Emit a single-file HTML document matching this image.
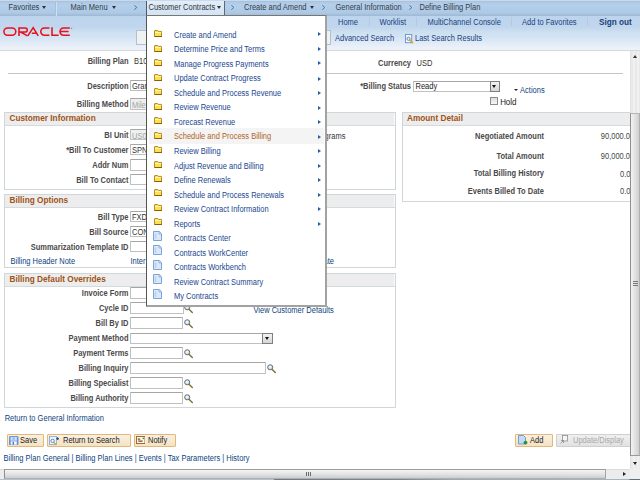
<!DOCTYPE html>
<html><head><meta charset="utf-8">
<style>
*{box-sizing:border-box;margin:0;padding:0}
html,body{width:640px;height:480px;overflow:hidden;background:#fff}
body{position:relative;font-family:"Liberation Sans",sans-serif;font-size:7.5px;color:#333}
.a{position:absolute;white-space:nowrap;line-height:7.5px;font-size:7.5px;transform:translateY(.5px) scaleY(1.13);transform-origin:0 6.3px}
.b{font-weight:bold;color:#4a4a4a}
.lnk{color:#0e3f80}
.r{text-align:right}
#nav{position:absolute;left:0;top:0;width:640px;height:15.5px;background:linear-gradient(#cadcee 0,#c6daee 1px,#a9c2de 1.5px,#b0cae6 2.5px,#b4cfeb 5px,#b1cce8 9px,#aec9e4 13px,#a6c0dc 14.5px,#a0bad7 15.5px)}
#hdr{position:absolute;left:0;top:15.5px;width:640px;height:35px;background:linear-gradient(#bdd4ed 0,#c0d6ee 11px,#c6daee 13px,#cde0f0 16px,#d2e2f3 20px,#dae7f5 24px,#e3ecf7 28px,#ecf1f9 32px,#f0f4f9 35px)}
#hdrline{position:absolute;left:0;top:50px;width:640px;height:1px;background:#d4d8dc}
.navt{color:#333c4a}
.sep{position:absolute;width:1px;background:#a9c0da}
.hsep{position:absolute;width:1px;background:#b4c8de}
.hlnk{color:#19427c}
.inp{position:absolute;background:#fff;border:1px solid #c0c0c0;border-top-color:#a6a6a6;border-radius:1px}
.dis{background:#eef0ef;color:#9a9a9a}
.box{position:absolute;border:1px solid #cfd7da;background:#fff}
.boxh{position:absolute;left:0;top:0;right:0;height:13px;background:#ededed;border-bottom:1px solid #d3dbde;box-shadow:inset -1px 0 0 #f8fafa}
.gh{color:#9e5216;font-size:8.25px;line-height:8.25px}
.srch{position:absolute;width:10px;height:10px}
.btn{position:absolute;height:13px;background:linear-gradient(#fbf1e0,#f5e2c3);border:1px solid #e3b77a;border-radius:1px}
#menu{position:absolute;left:146px;top:15px;width:181px;height:291.7px;background:#fff;border-left:1px solid #555;border-top:1px solid #777;border-right:2px solid #a2a2a2;border-bottom:2px solid #a2a2a2}
.mi{position:absolute;left:27px;color:#1a4690}
.fold{position:absolute;left:6.6px;width:8.5px;height:7px}
.doc{position:absolute;left:6.2px;width:9px;height:10px}
.arr{position:absolute;left:171px;width:0;height:0;border-left:3px solid #2461a8;border-top:2.5px solid transparent;border-bottom:2.5px solid transparent}
</style></head><body>

<svg width="0" height="0" style="position:absolute">
<defs>
<symbol id="mag" viewBox="0 0 10 10">
 <defs><radialGradient id="lens" cx=".45" cy=".4" r=".6"><stop offset="0" stop-color="#ffffff"/><stop offset="1" stop-color="#a9d0f2"/></radialGradient></defs>
 <circle cx="3.2" cy="3.3" r="2.55" fill="url(#lens)" stroke="#6d6d6d" stroke-width="1"/>
 <path d="M5.2 5.4L8.3 8.6" stroke="#7d7232" stroke-width="1.4" stroke-linecap="round"/>
</symbol>
</defs></svg>
<!-- NAV BAR -->
<div id="nav"></div>
<div class="a navt" style="left:8.5px;top:3.80px">Favorites</div>
<div style="position:absolute;left:42.1px;top:5.8px;border-top:3px solid #2e333b;border-left:2.9px solid transparent;border-right:2.9px solid transparent"></div>
<div class="sep" style="left:55px;top:1.5px;height:14px"></div><div style="position:absolute;left:56px;top:1.5px;width:1px;height:14px;background:#cfe0f1"></div>
<div class="a navt" style="left:70.5px;top:3.80px">Main Menu</div>
<div style="position:absolute;left:112.1px;top:5.8px;border-top:3px solid #2e333b;border-left:2.9px solid transparent;border-right:2.9px solid transparent"></div>
<svg style="position:absolute;left:134.2px;top:5px" width="3.5" height="5.5" viewBox="0 0 3.5 5.5"><path d="M.4 .4L2.8 2.4L.4 4.8" fill="none" stroke="#4d6a96" stroke-width=".95"/></svg>
<!-- active tab -->
<div style="position:absolute;left:146px;top:1px;width:79px;height:15px;background:linear-gradient(#e4edf7,#d3e2f2);border-left:1px solid #4f5a68;border-right:1px solid #5d6878"></div>
<div class="a navt" style="left:148.5px;top:3.80px;color:#2c3440">Customer Contracts</div>
<div style="position:absolute;left:217.1px;top:5.8px;border-top:3px solid #2e333b;border-left:2.9px solid transparent;border-right:2.9px solid transparent"></div>
<svg style="position:absolute;left:230.5px;top:5px" width="3.5" height="5.5" viewBox="0 0 3.5 5.5"><path d="M.4 .4L2.8 2.4L.4 4.8" fill="none" stroke="#4d6a96" stroke-width=".95"/></svg>
<div class="a navt" style="left:244px;top:3.80px">Create and Amend</div>
<div style="position:absolute;left:309.6px;top:5.8px;border-top:3px solid #2e333b;border-left:2.9px solid transparent;border-right:2.9px solid transparent"></div>
<svg style="position:absolute;left:321.5px;top:5px" width="3.5" height="5.5" viewBox="0 0 3.5 5.5"><path d="M.4 .4L2.8 2.4L.4 4.8" fill="none" stroke="#4d6a96" stroke-width=".95"/></svg>
<div class="a navt" style="left:335.5px;top:3.80px">General Information</div>
<svg style="position:absolute;left:408.8px;top:5px" width="3.5" height="5.5" viewBox="0 0 3.5 5.5"><path d="M.4 .4L2.8 2.4L.4 4.8" fill="none" stroke="#4d6a96" stroke-width=".95"/></svg>
<div class="a navt" style="left:419.5px;top:3.80px">Define Billing Plan</div>

<!-- HEADER -->
<div id="hdr"></div>
<div id="hdrline"></div>
<svg style="position:absolute;left:0;top:20px" width="80" height="20" viewBox="0 20 80 20">
 <g fill="none" stroke="#e8101c" stroke-width="1.55">
  <rect x="3.9" y="27.9" width="11.9" height="7.3" rx="3.65"/>
  <path d="M19 35.9V27.9H25.2A2.05 2.05 0 0 1 25.2 32H20.5L27.5 35.9"/>
  <path d="M27.8 35.9L33.2 27.6L38.2 35.9M31.8 33.2H35.8"/>
  <path d="M49.4 27.9H44.4A3.65 3.65 0 0 0 44.4 35.2H49.4"/>
  <path d="M52 27.3V35.2H58.6"/>
  <path d="M69.8 27.9H63.6A3.65 3.65 0 0 0 63.6 35.2H69.8M60.6 31.55H68.6"/>
 </g>
 <circle cx="71.7" cy="28.3" r=".5" fill="#e8101c"/>
</svg>
<div style="position:absolute;left:136px;top:30px;width:195px;height:15px;background:#eef3f1;border:1px solid #b4c0cc"></div>
<div class="a hlnk" style="left:338px;top:18.70px">Home</div>
<div class="hsep" style="left:369px;top:17px;height:9px"></div>
<div class="a hlnk" style="left:379.5px;top:18.70px">Worklist</div>
<div class="hsep" style="left:416px;top:17px;height:9px"></div>
<div class="a hlnk" style="left:427.5px;top:18.70px">MultiChannel Console</div>
<div class="hsep" style="left:511px;top:17px;height:9px"></div>
<div class="a hlnk" style="left:522px;top:18.70px">Add to Favorites</div>
<div class="hsep" style="left:587px;top:17px;height:9px"></div>
<div class="a hlnk b" style="left:599px;top:19.20px;font-size:8.2px;line-height:8.2px;color:#1b3f78">Sign out</div>
<div class="a hlnk" style="left:335px;top:34.90px">Advanced Search</div>
<svg style="position:absolute;left:405px;top:34px" width="9" height="9.5" viewBox="0 0 9 9.5">
 <rect x=".5" y=".5" width="6.2" height="8.2" fill="#f2f6fc" stroke="#6f9ad8" stroke-width="1"/>
 <circle cx="3.5" cy="4.8" r="1.6" fill="#e6f0fb" stroke="#5a6f8c" stroke-width=".8"/>
 <path d="M4.8 6.2L7.6 8.8" stroke="#d9a21c" stroke-width="1.3" stroke-linecap="round"/>
</svg>
<div class="a hlnk" style="left:415px;top:34.90px">Last Search Results</div>

<!-- CONTENT -->
<div class="a b r" style="left:0;width:128.5px;top:57.70px">Billing Plan</div>
<div class="a" style="left:134px;top:57.70px">B10</div>
<div class="a b r" style="left:300px;width:111px;top:59.50px">Currency</div>
<div class="a" style="left:416.5px;top:59.50px">USD</div>
<div style="position:absolute;left:8px;top:73px;width:615px;height:1px;background:#c6c6c6"></div>

<div class="a b r" style="left:0;width:128.5px;top:83.40px">Description</div>
<div class="inp" style="left:130px;top:79.90px;width:40px;height:11.60px"></div>
<div class="a" style="left:132px;top:83.40px">Gran</div>
<div class="a b r" style="left:0;width:128.5px;top:100.70px">Billing Method</div>
<div class="inp dis" style="left:130px;top:98.40px;width:40px;height:11.60px"></div>
<div class="a" style="left:132px;top:102.00px;color:#a3a3a3">Mile</div>

<div class="a b r" style="left:300px;width:111px;top:82.80px">*Billing Status</div>
<div class="inp" style="left:413px;top:81px;width:87px;height:11px"></div>
<div class="a" style="left:415.5px;top:83.00px;color:#222">Ready</div>
<div style="position:absolute;left:489.5px;top:81px;width:10.5px;height:11px;background:linear-gradient(#f2f2f2,#d6d6d6);border:1px solid #7f7f7f"></div>
<div style="position:absolute;left:492.3px;top:85px;border-top:3.5px solid #111;border-left:2.5px solid transparent;border-right:2.5px solid transparent"></div>
<div style="position:absolute;left:513.8px;top:89.2px;border-top:2.3px solid #222;border-left:2px solid transparent;border-right:2px solid transparent"></div>
<div class="a lnk" style="left:520.1px;top:87.20px">Actions</div>
<div style="position:absolute;left:490px;top:97px;width:8px;height:8px;background:linear-gradient(#dcdcdc,#f6f6f6);border:1px solid #8d8d8d"></div>
<div class="a" style="left:500.2px;top:99.40px;color:#222;font-size:8px;letter-spacing:-.1px">Hold</div>

<!-- Customer Information -->
<div class="box" style="left:4px;top:112px;width:392px;height:78px"><div class="boxh"></div></div>
<div class="a b gh" style="left:9.5px;top:115.30px">Customer Information</div>
<div class="a b r" style="left:0;width:128.5px;top:132.20px">BI Unit</div>
<div class="inp dis" style="left:130px;top:128.90px;width:30px;height:11.60px"></div>
<div class="a" style="left:132px;top:132.50px;color:#a3a3a3">US0</div>
<div class="a" style="left:324.6px;top:133.20px">grams</div>
<div class="a b r" style="left:0;width:128.5px;top:147.10px">*Bill To Customer</div>
<div class="inp" style="left:130px;top:143.90px;width:30px;height:11.60px"></div>
<div class="a" style="left:132px;top:147.30px">SPN</div>
<div class="a b r" style="left:0;width:128.5px;top:162.10px">Addr Num</div>
<div class="inp" style="left:130px;top:159.40px;width:30px;height:11.60px"></div>
<div class="a b r" style="left:0;width:128.5px;top:177.10px">Bill To Contact</div>
<div class="inp" style="left:130px;top:173.90px;width:30px;height:11.60px"></div>

<!-- Billing Options -->
<div class="box" style="left:4px;top:194px;width:392px;height:74px"><div class="boxh"></div></div>
<div class="a b gh" style="left:9.5px;top:197.40px">Billing Options</div>
<div class="a b r" style="left:0;width:128.5px;top:213.60px">Bill Type</div>
<div class="inp" style="left:130px;top:210.90px;width:30px;height:11.60px"></div>
<div class="a" style="left:132px;top:213.60px">FXD</div>
<div class="a b r" style="left:0;width:128.5px;top:228.80px">Bill Source</div>
<div class="inp" style="left:130px;top:225.90px;width:30px;height:11.60px"></div>
<div class="a" style="left:132px;top:228.80px">CON</div>
<div class="a b r" style="left:0;width:128.5px;top:243.60px">Summarization Template ID</div>
<div class="inp" style="left:130px;top:240.90px;width:30px;height:11.60px"></div>
<div class="a lnk" style="left:10.5px;top:257.80px">Billing Header Note</div>
<div class="a lnk" style="left:130.5px;top:257.80px">Inter</div>
<div class="a lnk" style="left:323.5px;top:257.80px">ate</div>

<!-- Billing Default Overrides -->
<div class="box" style="left:4px;top:273px;width:392px;height:135px"><div class="boxh"></div></div>
<div class="a b gh" style="left:9.5px;top:275.60px">Billing Default Overrides</div>
<div class="a b r" style="left:0;width:128.5px;top:290.00px">Invoice Form</div>
<div class="inp" style="left:130px;top:287.40px;width:30px;height:11.60px"></div>
<div class="a b r" style="left:0;width:128.5px;top:305.20px">Cycle ID</div>
<div class="inp" style="left:130px;top:302.40px;width:54px;height:11.60px"></div>
<div class="a lnk" style="left:253.5px;top:306.90px">View Customer Defaults</div>
<div class="a b r" style="left:0;width:128.5px;top:320.00px">Bill By ID</div>
<div class="inp" style="left:130px;top:317.40px;width:53px;height:11.60px"></div>
<div class="a b r" style="left:0;width:128.5px;top:335.00px">Payment Method</div>
<div class="inp" style="left:130px;top:333px;width:143px;height:11px"></div>
<div style="position:absolute;left:262.3px;top:333px;width:10.5px;height:11px;background:linear-gradient(#f2f2f2,#d6d6d6);border:1px solid #7f7f7f"></div>
<div style="position:absolute;left:265.1px;top:337px;border-top:3.5px solid #111;border-left:2.5px solid transparent;border-right:2.5px solid transparent"></div>
<div class="a b r" style="left:0;width:128.5px;top:350.00px">Payment Terms</div>
<div class="inp" style="left:130px;top:347.40px;width:53px;height:11.60px"></div>
<div class="a b r" style="left:0;width:128.5px;top:365.00px">Billing Inquiry</div>
<div class="inp" style="left:130px;top:362.40px;width:136px;height:11.60px"></div>
<div class="a b r" style="left:0;width:128.5px;top:380.00px">Billing Specialist</div>
<div class="inp" style="left:130px;top:377.40px;width:53px;height:11.60px"></div>
<div class="a b r" style="left:0;width:128.5px;top:395.00px">Billing Authority</div>
<div class="inp" style="left:130px;top:392.40px;width:53px;height:11.60px"></div>

<svg class="srch" style="left:184.3px;top:304.0px"><use href="#mag"/></svg>
<svg class="srch" style="left:183.6px;top:319.0px"><use href="#mag"/></svg>
<svg class="srch" style="left:183.6px;top:349.0px"><use href="#mag"/></svg>
<svg class="srch" style="left:266.6px;top:364.2px"><use href="#mag"/></svg>
<svg class="srch" style="left:183.6px;top:379.0px"><use href="#mag"/></svg>
<svg class="srch" style="left:183.6px;top:394.0px"><use href="#mag"/></svg>
<div class="a lnk" style="left:4.7px;top:414.60px">Return to General Information</div>

<!-- Amount Detail -->
<div class="box" style="left:402px;top:112px;width:240px;height:90px"><div class="boxh"></div></div>
<div class="a b gh" style="left:407px;top:115.30px">Amount Detail</div>
<div class="a b r" style="left:420px;width:124px;top:132.90px">Negotiated Amount</div>
<div class="a" style="left:600.8px;top:133.30px;color:#444">90,000.00</div>
<div class="a b r" style="left:420px;width:124px;top:152.70px">Total Amount</div>
<div class="a" style="left:600.8px;top:153.00px;color:#444">90,000.00</div>
<div class="a b r" style="left:420px;width:124px;top:169.90px">Total Billing History</div>
<div class="a" style="left:620px;top:171.20px;color:#444">0.00</div>
<div class="a b r" style="left:420px;width:124px;top:187.90px">Events Billed To Date</div>
<div class="a" style="left:620px;top:188.40px;color:#444">0.00</div>

<!-- Buttons -->
<div class="btn" style="left:7px;top:434px;width:37px"></div>
<div class="a" style="left:20px;top:437.30px;color:#222">Save</div>
<div class="btn" style="left:47px;top:434px;width:83.5px"></div>
<div class="a" style="left:63px;top:437.30px;color:#222">Return to Search</div>
<div class="btn" style="left:133.5px;top:434px;width:42px"></div>
<div class="a" style="left:148px;top:437.30px;color:#222">Notify</div>
<div class="btn" style="left:515px;top:434px;width:38px"></div>
<div class="a" style="left:530px;top:437.30px;color:#222">Add</div>
<div class="btn" style="left:555.5px;top:434px;width:80px;background:linear-gradient(#f0f0f0,#e2e2e2);border-color:#cfcfcf"></div>
<div class="a" style="left:573px;top:437.30px;color:#a8a8a8">Update/Display</div>


<svg style="position:absolute;left:9px;top:436px" width="9.5" height="9" viewBox="0 0 9.5 9">
 <rect x=".4" y=".4" width="8.6" height="8.3" rx=".5" fill="#6f9fe2" stroke="#4f86d8" stroke-width=".8"/>
 <rect x="1.6" y="1" width="6.3" height="3.6" fill="#cfe0f7"/>
 <rect x="3.5" y="1.2" width="2.3" height="3" fill="#9fc0ee"/>
 <rect x="1.8" y="5.4" width="5.9" height="3.2" fill="#f4f8ff"/>
 <rect x="3.6" y="5.8" width="1.3" height="2.8" fill="#2f6fc8"/>
</svg>
<svg style="position:absolute;left:49px;top:436px" width="11" height="9" viewBox="0 0 11 9">
 <rect x=".4" y=".4" width="7" height="8" fill="#eef4fc" stroke="#79a5e2" stroke-width=".8"/>
 <circle cx="3.6" cy="4.9" r="1.7" fill="#fff" stroke="#4e7fc4" stroke-width=".9"/>
 <path d="M4.9 6.3L6.8 8.4" stroke="#e39a20" stroke-width="1.2" stroke-linecap="round"/>
 <path d="M8.6 1.3V4M7.3 2.6H9.9" stroke="#1f4b90" stroke-width="1.1"/>
 <path d="M10 3.5L10.8 4.5" stroke="#9aa3b3" stroke-width=".8"/>
</svg>
<svg style="position:absolute;left:135.8px;top:436px" width="9.5" height="8" viewBox="0 0 9.5 8">
 <rect x=".5" y=".5" width="8.5" height="7" fill="#fffaf0" stroke="#9c6a3a" stroke-width="1"/>
 <path d="M1.8 3.2H4.2M2.2 5.2H6.6" stroke="#7a4816" stroke-width="1.3"/>
 <circle cx="7.3" cy="2.3" r=".9" fill="#3aa03a"/>
</svg>
<svg style="position:absolute;left:517.5px;top:434.5px" width="10" height="10" viewBox="0 0 10 10">
 <path d="M.5 .5H5.5L7.5 2.5V9H.5Z" fill="#c6daf4" stroke="#6a95cf" stroke-width=".9"/>
 <circle cx="7.5" cy="7.6" r="1.9" fill="#1f9a3a"/>
</svg>
<svg style="position:absolute;left:559.5px;top:435px" width="8" height="9" viewBox="0 0 8 9">
 <rect x="2.5" y=".5" width="5" height="5.5" fill="#f6f6f6" stroke="#8d8d8d" stroke-width=".8"/>
 <path d="M.5 8.5L3.5 5.5M1 5.5H3.5V8" stroke="#8d8d8d" stroke-width=".8" fill="none"/>
</svg>
<div class="a lnk" style="left:3.5px;top:454.80px">Billing Plan General | Billing Plan Lines | Events | Tax Parameters | History</div>

<!-- Scrollbars -->
<div style="position:absolute;left:630px;top:51px;width:10px;height:418px;background:repeating-linear-gradient(90deg,#e9e9e9 0,#e9e9e9 2px,#f1f1f1 2px,#f1f1f1 4px);border-left:1px solid #e2e2e2"></div>
<div style="position:absolute;left:633px;top:55px;border-bottom:3px solid #333;border-left:2px solid transparent;border-right:2px solid transparent"></div>
<div style="position:absolute;left:630px;top:112.5px;width:10px;height:343px;background:linear-gradient(90deg,#f2f2f2,#e2e2e2 50%,#cfcfcf);border-left:1px solid #8f8f8f;border-top:1px solid #b5b5b5;border-bottom:1px solid #9a9a9a;border-right:1px solid #b0b0b0"></div>
<div style="position:absolute;left:632.5px;top:281px;width:5px;height:1px;background:#7a7a7a;box-shadow:0 2px 0 #7a7a7a,0 4px 0 #7a7a7a"></div>
<div style="position:absolute;left:633px;top:462px;border-top:3px solid #222;border-left:2px solid transparent;border-right:2px solid transparent"></div>
<div style="position:absolute;left:0;top:469px;width:630px;height:10px;background:#ececec;border-top:1px solid #dcdcdc"></div>
<div style="position:absolute;left:4px;top:469px;width:602px;height:10px;background:linear-gradient(#f4f4f4,#e4e4e4 50%,#cdcdcd);border-left:1px solid #8f8f8f;border-top:1px solid #9c9c9c;border-right:1px solid #a5a5a5;border-bottom:1px solid #b0b0b0"></div>
<div style="position:absolute;left:306px;top:472px;width:1px;height:4px;background:#6a6a6a;box-shadow:2px 0 0 #6a6a6a,4px 0 0 #6a6a6a"></div>
<div style="position:absolute;left:623px;top:472px;border-left:3px solid #222;border-top:2px solid transparent;border-bottom:2px solid transparent"></div>
<div style="position:absolute;left:630px;top:469px;width:10px;height:10px;background:#efefef"></div>
<div style="position:absolute;left:0;top:479px;width:640px;height:1px;background:linear-gradient(90deg,#adc3d5 0,#adc3d5 274px,#707a8a 274px,#7a8696 400px,#9aabbd 455px,#a3b5c8 629px,#646e7c 630px)"></div>

<!-- MENU -->
<div id="menu">
<svg class="fold" style="top:14.10px" viewBox="0 0 8.5 7"><path d="M.5 6.5V1Q.5.5 1 .5H3.6L4.3 1.4H7.6Q8 1.4 8 1.9V6.5Z" fill="#fbe24a" stroke="#b88a2a" stroke-width="1"/><path d="M1 2.5H7.5" stroke="#fff6c0" stroke-width=".9"/><path d="M.5 6.5H8V2" fill="none" stroke="#8c5c12" stroke-width="1"/></svg>
<div class="arr" style="top:16.20px"></div>
<div class="a mi" style="top:15.55px">Create and Amend</div>
<svg class="fold" style="top:28.59px" viewBox="0 0 8.5 7"><path d="M.5 6.5V1Q.5.5 1 .5H3.6L4.3 1.4H7.6Q8 1.4 8 1.9V6.5Z" fill="#fbe24a" stroke="#b88a2a" stroke-width="1"/><path d="M1 2.5H7.5" stroke="#fff6c0" stroke-width=".9"/><path d="M.5 6.5H8V2" fill="none" stroke="#8c5c12" stroke-width="1"/></svg>
<div class="arr" style="top:30.69px"></div>
<div class="a mi" style="top:30.10px">Determine Price and Terms</div>
<svg class="fold" style="top:43.08px" viewBox="0 0 8.5 7"><path d="M.5 6.5V1Q.5.5 1 .5H3.6L4.3 1.4H7.6Q8 1.4 8 1.9V6.5Z" fill="#fbe24a" stroke="#b88a2a" stroke-width="1"/><path d="M1 2.5H7.5" stroke="#fff6c0" stroke-width=".9"/><path d="M.5 6.5H8V2" fill="none" stroke="#8c5c12" stroke-width="1"/></svg>
<div class="arr" style="top:45.18px"></div>
<div class="a mi" style="top:44.65px">Manage Progress Payments</div>
<svg class="fold" style="top:57.57px" viewBox="0 0 8.5 7"><path d="M.5 6.5V1Q.5.5 1 .5H3.6L4.3 1.4H7.6Q8 1.4 8 1.9V6.5Z" fill="#fbe24a" stroke="#b88a2a" stroke-width="1"/><path d="M1 2.5H7.5" stroke="#fff6c0" stroke-width=".9"/><path d="M.5 6.5H8V2" fill="none" stroke="#8c5c12" stroke-width="1"/></svg>
<div class="arr" style="top:60.67px"></div>
<div class="a mi" style="top:59.20px">Update Contract Progress</div>
<svg class="fold" style="top:72.06px" viewBox="0 0 8.5 7"><path d="M.5 6.5V1Q.5.5 1 .5H3.6L4.3 1.4H7.6Q8 1.4 8 1.9V6.5Z" fill="#fbe24a" stroke="#b88a2a" stroke-width="1"/><path d="M1 2.5H7.5" stroke="#fff6c0" stroke-width=".9"/><path d="M.5 6.5H8V2" fill="none" stroke="#8c5c12" stroke-width="1"/></svg>
<div class="arr" style="top:75.16px"></div>
<div class="a mi" style="top:73.75px">Schedule and Process Revenue</div>
<svg class="fold" style="top:86.55px" viewBox="0 0 8.5 7"><path d="M.5 6.5V1Q.5.5 1 .5H3.6L4.3 1.4H7.6Q8 1.4 8 1.9V6.5Z" fill="#fbe24a" stroke="#b88a2a" stroke-width="1"/><path d="M1 2.5H7.5" stroke="#fff6c0" stroke-width=".9"/><path d="M.5 6.5H8V2" fill="none" stroke="#8c5c12" stroke-width="1"/></svg>
<div class="arr" style="top:89.65px"></div>
<div class="a mi" style="top:88.30px">Review Revenue</div>
<svg class="fold" style="top:101.04px" viewBox="0 0 8.5 7"><path d="M.5 6.5V1Q.5.5 1 .5H3.6L4.3 1.4H7.6Q8 1.4 8 1.9V6.5Z" fill="#fbe24a" stroke="#b88a2a" stroke-width="1"/><path d="M1 2.5H7.5" stroke="#fff6c0" stroke-width=".9"/><path d="M.5 6.5H8V2" fill="none" stroke="#8c5c12" stroke-width="1"/></svg>
<div class="arr" style="top:104.14px"></div>
<div class="a mi" style="top:102.85px">Forecast Revenue</div>
<div style="position:absolute;left:1.5px;top:112.00px;width:175.5px;height:15.7px;background:#f4f4f4"></div>
<svg class="fold" style="top:115.53px" viewBox="0 0 8.5 7"><path d="M.5 6.5V1Q.5.5 1 .5H3.6L4.3 1.4H7.6Q8 1.4 8 1.9V6.5Z" fill="#fbe24a" stroke="#b88a2a" stroke-width="1"/><path d="M1 2.5H7.5" stroke="#fff6c0" stroke-width=".9"/><path d="M.5 6.5H8V2" fill="none" stroke="#8c5c12" stroke-width="1"/></svg>
<div class="arr" style="top:118.63px"></div>
<div class="a mi" style="top:117.40px;color:#b0641e">Schedule and Process Billing</div>
<svg class="fold" style="top:130.02px" viewBox="0 0 8.5 7"><path d="M.5 6.5V1Q.5.5 1 .5H3.6L4.3 1.4H7.6Q8 1.4 8 1.9V6.5Z" fill="#fbe24a" stroke="#b88a2a" stroke-width="1"/><path d="M1 2.5H7.5" stroke="#fff6c0" stroke-width=".9"/><path d="M.5 6.5H8V2" fill="none" stroke="#8c5c12" stroke-width="1"/></svg>
<div class="arr" style="top:133.12px"></div>
<div class="a mi" style="top:131.95px">Review Billing</div>
<svg class="fold" style="top:144.51px" viewBox="0 0 8.5 7"><path d="M.5 6.5V1Q.5.5 1 .5H3.6L4.3 1.4H7.6Q8 1.4 8 1.9V6.5Z" fill="#fbe24a" stroke="#b88a2a" stroke-width="1"/><path d="M1 2.5H7.5" stroke="#fff6c0" stroke-width=".9"/><path d="M.5 6.5H8V2" fill="none" stroke="#8c5c12" stroke-width="1"/></svg>
<div class="arr" style="top:147.61px"></div>
<div class="a mi" style="top:146.50px">Adjust Revenue and Billing</div>
<svg class="fold" style="top:159.00px" viewBox="0 0 8.5 7"><path d="M.5 6.5V1Q.5.5 1 .5H3.6L4.3 1.4H7.6Q8 1.4 8 1.9V6.5Z" fill="#fbe24a" stroke="#b88a2a" stroke-width="1"/><path d="M1 2.5H7.5" stroke="#fff6c0" stroke-width=".9"/><path d="M.5 6.5H8V2" fill="none" stroke="#8c5c12" stroke-width="1"/></svg>
<div class="arr" style="top:162.10px"></div>
<div class="a mi" style="top:161.05px">Define Renewals</div>
<svg class="fold" style="top:173.49px" viewBox="0 0 8.5 7"><path d="M.5 6.5V1Q.5.5 1 .5H3.6L4.3 1.4H7.6Q8 1.4 8 1.9V6.5Z" fill="#fbe24a" stroke="#b88a2a" stroke-width="1"/><path d="M1 2.5H7.5" stroke="#fff6c0" stroke-width=".9"/><path d="M.5 6.5H8V2" fill="none" stroke="#8c5c12" stroke-width="1"/></svg>
<div class="arr" style="top:176.59px"></div>
<div class="a mi" style="top:175.60px">Schedule and Process Renewals</div>
<svg class="fold" style="top:187.98px" viewBox="0 0 8.5 7"><path d="M.5 6.5V1Q.5.5 1 .5H3.6L4.3 1.4H7.6Q8 1.4 8 1.9V6.5Z" fill="#fbe24a" stroke="#b88a2a" stroke-width="1"/><path d="M1 2.5H7.5" stroke="#fff6c0" stroke-width=".9"/><path d="M.5 6.5H8V2" fill="none" stroke="#8c5c12" stroke-width="1"/></svg>
<div class="arr" style="top:191.08px"></div>
<div class="a mi" style="top:190.15px">Review Contract Information</div>
<svg class="fold" style="top:202.47px" viewBox="0 0 8.5 7"><path d="M.5 6.5V1Q.5.5 1 .5H3.6L4.3 1.4H7.6Q8 1.4 8 1.9V6.5Z" fill="#fbe24a" stroke="#b88a2a" stroke-width="1"/><path d="M1 2.5H7.5" stroke="#fff6c0" stroke-width=".9"/><path d="M.5 6.5H8V2" fill="none" stroke="#8c5c12" stroke-width="1"/></svg>
<div class="arr" style="top:205.57px"></div>
<div class="a mi" style="top:204.70px">Reports</div>
<svg class="doc" style="top:214.76px" viewBox="0 0 9 10"><path d="M.5 .5H6.3L8.5 2.7V9.5H.5Z" fill="#dce8f8" stroke="#7aa2dc" stroke-width="1"/><path d="M2.5 2.5V8" stroke="#b9d0f0" stroke-width="1.6"/><path d="M6 .8V3H8.2" fill="none" stroke="#7aa2dc" stroke-width=".7"/></svg>
<div class="a mi" style="top:219.25px">Contracts Center</div>
<svg class="doc" style="top:229.25px" viewBox="0 0 9 10"><path d="M.5 .5H6.3L8.5 2.7V9.5H.5Z" fill="#dce8f8" stroke="#7aa2dc" stroke-width="1"/><path d="M2.5 2.5V8" stroke="#b9d0f0" stroke-width="1.6"/><path d="M6 .8V3H8.2" fill="none" stroke="#7aa2dc" stroke-width=".7"/></svg>
<div class="a mi" style="top:233.80px">Contracts WorkCenter</div>
<svg class="doc" style="top:243.74px" viewBox="0 0 9 10"><path d="M.5 .5H6.3L8.5 2.7V9.5H.5Z" fill="#dce8f8" stroke="#7aa2dc" stroke-width="1"/><path d="M2.5 2.5V8" stroke="#b9d0f0" stroke-width="1.6"/><path d="M6 .8V3H8.2" fill="none" stroke="#7aa2dc" stroke-width=".7"/></svg>
<div class="a mi" style="top:248.35px">Contracts Workbench</div>
<svg class="doc" style="top:258.23px" viewBox="0 0 9 10"><path d="M.5 .5H6.3L8.5 2.7V9.5H.5Z" fill="#dce8f8" stroke="#7aa2dc" stroke-width="1"/><path d="M2.5 2.5V8" stroke="#b9d0f0" stroke-width="1.6"/><path d="M6 .8V3H8.2" fill="none" stroke="#7aa2dc" stroke-width=".7"/></svg>
<div class="a mi" style="top:262.90px">Review Contract Summary</div>
<svg class="doc" style="top:272.72px" viewBox="0 0 9 10"><path d="M.5 .5H6.3L8.5 2.7V9.5H.5Z" fill="#dce8f8" stroke="#7aa2dc" stroke-width="1"/><path d="M2.5 2.5V8" stroke="#b9d0f0" stroke-width="1.6"/><path d="M6 .8V3H8.2" fill="none" stroke="#7aa2dc" stroke-width=".7"/></svg>
<div class="a mi" style="top:277.45px">My Contracts</div>
</div>
</body></html>
